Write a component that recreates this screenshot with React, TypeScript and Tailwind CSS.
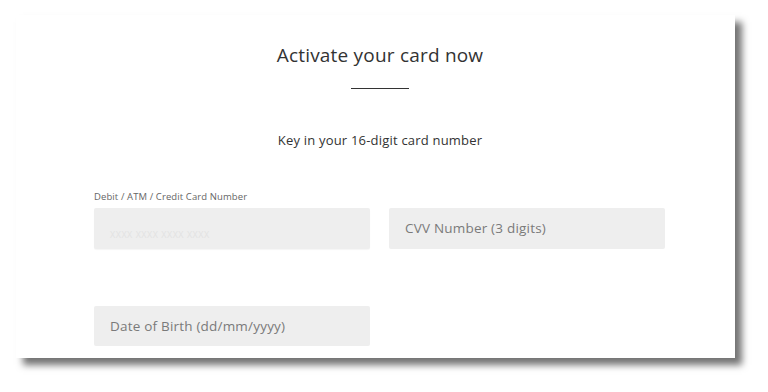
export default function App() {
  return (
    <div className="min-h-[392px] w-[768px] bg-white pt-[15px] pl-[16px]">
      <section
        className="h-[343px] w-[719px] bg-white pl-[78px] pr-[69px] pt-[26px] shadow-[7px_7px_7px_rgba(0,0,0,0.55)]"
        style={{ fontFamily: '"Open Sans", "Noto Sans", sans-serif' }}
      >
        <h1 className="text-center text-[19px] leading-[28px] tracking-[0.2px] text-[#333]">
          Activate your card now
        </h1>
        <div className="mx-auto mt-[19px] h-px w-[58px] bg-[#333]" />

        <p className="mt-[42px] text-center text-[13px] leading-[18px] tracking-[0.2px] text-[#333]">
          Key in your 16-digit card number
        </p>

        <label className="mt-[42px] block text-[9.5px] leading-[12px] tracking-[0.1px] text-[#666]">
          Debit / ATM / Credit Card Number
        </label>
        <div className="mt-[5px] flex gap-[19px]">
          <div className="flex h-[41px] w-[276px] items-end rounded-[2px] bg-[#eeeeee] px-4 pb-[8px] shadow-[0_1px_1px_rgba(0,0,0,0.04)]">
            <span className="text-[9px] tracking-[0.5px] text-[#e2e2e2]">
              XXXX XXXX XXXX XXXX
            </span>
          </div>
          <div className="flex h-[41px] w-[276px] items-center rounded-[2px] bg-[#eeeeee] px-4 text-[13.5px] tracking-[0.2px] text-[#7a7a7a]">
            CVV Number (3 digits)
          </div>
        </div>

        <div className="mt-[57px] flex h-[40px] w-[276px] items-center rounded-[2px] bg-[#eeeeee] px-4 text-[13.5px] tracking-[0.2px] text-[#7a7a7a]">
          Date of Birth (dd/mm/yyyy)
        </div>
      </section>
    </div>
  );
}
